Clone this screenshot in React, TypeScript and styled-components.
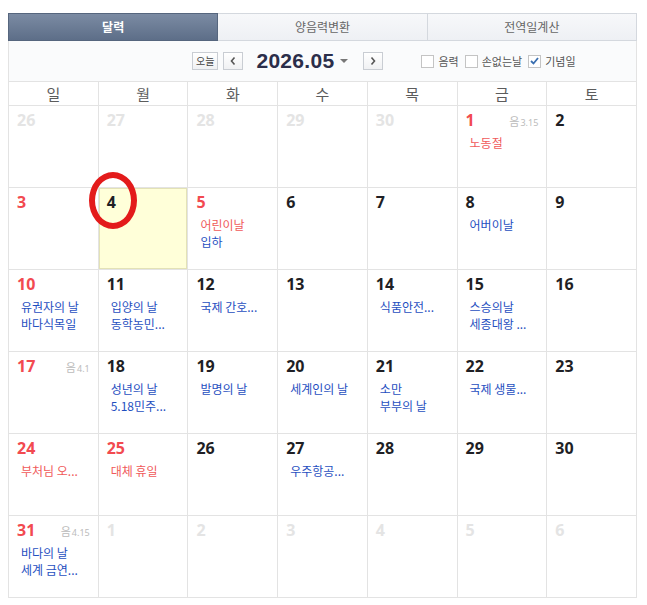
import React from "react";
import styled, { createGlobalStyle } from "styled-components";

const GlobalStyle = createGlobalStyle`
  body {
    margin: 8px;
    background: #fff;
    font-family: "Noto Sans", "Noto Sans CJK KR", sans-serif;
  }
`;

type Tone = "sun" | "sat" | "day" | "muted";

interface Ev {
  text: string;
  red?: boolean;
}

interface Day {
  n: number;
  tone: Tone;
  lunar?: string;
  events?: Ev[];
  today?: boolean;
}

const d = (n: number, tone: Tone, events: Ev[] = [], lunar?: string): Day => ({
  n,
  tone,
  events,
  lunar,
});

const weeks: Day[][] = [
  [
    d(26, "muted"),
    d(27, "muted"),
    d(28, "muted"),
    d(29, "muted"),
    d(30, "muted"),
    d(1, "sun", [{ text: "노동절", red: true }], "3.15"),
    d(2, "day"),
  ],
  [
    d(3, "sun"),
    { ...d(4, "day"), today: true },
    d(5, "sun", [{ text: "어린이날", red: true }, { text: "입하" }]),
    d(6, "day"),
    d(7, "day"),
    d(8, "day", [{ text: "어버이날" }]),
    d(9, "day"),
  ],
  [
    d(10, "sun", [{ text: "유권자의 날" }, { text: "바다식목일" }]),
    d(11, "day", [{ text: "입양의 날" }, { text: "동학농민..." }]),
    d(12, "day", [{ text: "국제 간호..." }]),
    d(13, "day"),
    d(14, "day", [{ text: "식품안전..." }]),
    d(15, "day", [{ text: "스승의날" }, { text: "세종대왕 ..." }]),
    d(16, "day"),
  ],
  [
    d(17, "sun", [], "4.1"),
    d(18, "day", [{ text: "성년의 날" }, { text: "5.18민주..." }]),
    d(19, "day", [{ text: "발명의 날" }]),
    d(20, "day", [{ text: "세계인의 날" }]),
    d(21, "day", [{ text: "소만" }, { text: "부부의 날" }]),
    d(22, "day", [{ text: "국제 생물..." }]),
    d(23, "day"),
  ],
  [
    d(24, "sun", [{ text: "부처님 오...", red: true }]),
    d(25, "sun", [{ text: "대체 휴일", red: true }]),
    d(26, "day"),
    d(27, "day", [{ text: "우주항공..." }]),
    d(28, "day"),
    d(29, "day"),
    d(30, "day"),
  ],
  [
    d(31, "sun", [{ text: "바다의 날" }, { text: "세계 금연..." }], "4.15"),
    d(1, "muted"),
    d(2, "muted"),
    d(3, "muted"),
    d(4, "muted"),
    d(5, "muted"),
    d(6, "muted"),
  ],
];

const dayNames = ["일", "월", "화", "수", "목", "금", "토"];

const Widget = styled.div`
  width: 629px;
  margin-top: 5px;
`;

const Tabs = styled.div`
  display: flex;
  height: 28px;
`;

const Tab = styled.div<{ $active?: boolean }>`
  flex: 1;
  display: flex;
  align-items: center;
  justify-content: center;
  font-size: 12px;
  box-sizing: border-box;
  border: 1px solid ${(p) => (p.$active ? "#56667e" : "#d4d8de")};
  border-left-width: ${(p) => (p.$active ? "1px" : "0")};
  color: ${(p) => (p.$active ? "#fff" : "#666")};
  font-weight: ${(p) => (p.$active ? 700 : 400)};
  background: ${(p) =>
    p.$active
      ? "linear-gradient(#7b8ba3, #5d6e88)"
      : "linear-gradient(#f7f8fa, #eef0f4)"};
  &:first-child {
    border-left-width: 1px;
  }
`;

const Toolbar = styled.div`
  height: 40px;
  box-sizing: border-box;
  display: flex;
  align-items: center;
  background: #fafbfc;
  border-left: 1px solid #e3e3e3;
  border-right: 1px solid #e3e3e3;
  padding-left: 183px;
`;

const SmallBtn = styled.button`
  height: 18px;
  min-width: 20px;
  padding: 0 3px;
  box-sizing: border-box;
  border: 1px solid #c9cdd3;
  background: linear-gradient(#ffffff, #f0f1f3);
  font-family: "Noto Sans CJK KR", sans-serif;
  font-size: 10px;
  line-height: 14px;
  color: #444;
  display: flex;
  align-items: center;
  justify-content: center;
  margin-right: 5px;
`;

const Month = styled.div`
  font-family: "Liberation Sans", Arial, sans-serif;
  font-size: 21px;
  font-weight: 700;
  color: #2b2e4a;
  margin-left: 8px;
  display: flex;
  align-items: center;
  letter-spacing: 0.3px;
`;

const Caret = styled.span`
  width: 0;
  height: 0;
  border-left: 4px solid transparent;
  border-right: 4px solid transparent;
  border-top: 4px solid #777;
  margin-left: 6px;
  margin-right: 15px;
`;

const Checks = styled.div`
  display: flex;
  align-items: center;
  margin-left: 33px;
  gap: 6px;
`;

const Check = styled.label`
  display: flex;
  align-items: center;
  gap: 4px;
  font-family: "Noto Sans CJK KR", sans-serif;
  font-size: 11px;
  color: #555;
`;

const Box = styled.span`
  width: 13px;
  height: 13px;
  box-sizing: border-box;
  border: 1px solid #c4c4c4;
  background: #fff;
  display: flex;
  align-items: center;
  justify-content: center;
`;

const Grid = styled.div`
  display: grid;
  grid-template-columns: repeat(7, 1fr);
  border-left: 1px solid #e3e3e3;
  border-top: 1px solid #e3e3e3;
`;

const HeadCell = styled.div`
  height: 24px;
  box-sizing: border-box;
  border-right: 1px solid #e3e3e3;
  border-bottom: 1px solid #e3e3e3;
  display: flex;
  align-items: center;
  justify-content: center;
  font-family: "Noto Sans CJK KR", sans-serif;
  font-size: 15px;
  color: #5c5c5c;
`;

const Cell = styled.div<{ $today?: boolean }>`
  position: relative;
  height: 82px;
  box-sizing: border-box;
  border-right: 1px solid #e3e3e3;
  border-bottom: 1px solid #e3e3e3;
  padding: 3px 8px 0 8px;
  background: ${(p) => (p.$today ? "#ffffd9" : "#fff")};
  box-shadow: ${(p) => (p.$today ? "inset 0 0 0 1px #e3e2b6" : "none")};
`;

const toneColor: Record<Tone, string> = {
  sun: "#f24a50",
  sat: "#222",
  day: "#1f1f25",
  muted: "#e4e4e4",
};

const Top = styled.div`
  display: flex;
  align-items: baseline;
  justify-content: space-between;
  height: 22px;
`;

const Num = styled.span<{ $tone: Tone }>`
  font-size: 16px;
  font-weight: 700;
  color: ${(p) => toneColor[p.$tone]};
`;

const Lunar = styled.span`
  color: #bbb;
  font-family: "Noto Sans CJK KR", sans-serif;
  font-size: 11px;
  & b {
    font-family: "Noto Sans", sans-serif;
    font-weight: 400;
    font-size: 9px;
    margin-left: 1px;
  }
`;

const Events = styled.div`
  padding-left: 4px;
  margin-top: 3px;
`;

const Event = styled.div<{ $red?: boolean }>`
  font-family: "Noto Sans CJK KR", sans-serif;
  font-size: 12px;
  line-height: 17px;
  color: ${(p) => (p.$red ? "#f05a5a" : "#1f4fbf")};
  white-space: nowrap;
`;

const Ring = styled.span`
  position: absolute;
  left: -10px;
  top: -16px;
  width: 48px;
  height: 57px;
  box-sizing: border-box;
  border: 6px solid #e31b1b;
  border-radius: 50%;
  pointer-events: none;
`;

const Arrow = ({ dir }: { dir: "l" | "r" }) => (
  <svg width="8" height="10" viewBox="0 0 8 10">
    <path
      d={dir === "l" ? "M5.5 1.5 L2.5 5 L5.5 8.5" : "M2.5 1.5 L5.5 5 L2.5 8.5"}
      fill="none"
      stroke="#555"
      strokeWidth="1.6"
    />
  </svg>
);

export default function App() {
  return (
    <>
      <GlobalStyle />
      <Widget>
        <Tabs>
          <Tab $active>달력</Tab>
          <Tab>양음력변환</Tab>
          <Tab>전역일계산</Tab>
        </Tabs>
        <Toolbar>
          <SmallBtn>오늘</SmallBtn>
          <SmallBtn>
            <Arrow dir="l" />
          </SmallBtn>
          <Month>
            2026.05
            <Caret />
          </Month>
          <SmallBtn>
            <Arrow dir="r" />
          </SmallBtn>
          <Checks>
            <Check>
              <Box />
              음력
            </Check>
            <Check>
              <Box />
              손없는날
            </Check>
            <Check>
              <Box>
                <svg width="9" height="8" viewBox="0 0 9 8">
                  <path d="M1 4 L3.5 6.5 L8 1" fill="none" stroke="#3a6fb0" strokeWidth="1.8" />
                </svg>
              </Box>
              기념일
            </Check>
          </Checks>
        </Toolbar>
        <Grid>
          {dayNames.map((n) => (
            <HeadCell key={n}>{n}</HeadCell>
          ))}
          {weeks.map((w, wi) =>
            w.map((day, di) => (
              <Cell key={`${wi}-${di}`} $today={day.today}>
                {day.today && <Ring />}
                <Top>
                  <Num $tone={day.tone}>{day.n}</Num>
                  {day.lunar && (
                    <Lunar>
                      음<b>{day.lunar}</b>
                    </Lunar>
                  )}
                </Top>
                {day.events && day.events.length > 0 && (
                  <Events>
                    {day.events.map((e) => (
                      <Event key={e.text} $red={e.red}>
                        {e.text}
                      </Event>
                    ))}
                  </Events>
                )}
              </Cell>
            ))
          )}
        </Grid>
      </Widget>
    </>
  );
}
